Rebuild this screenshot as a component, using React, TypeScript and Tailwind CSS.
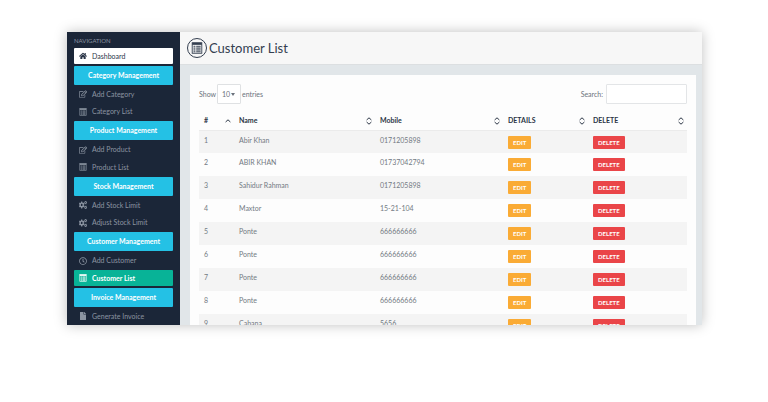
import type { ReactNode } from "react";
import { FaCogs, FaFile, FaHome, FaRegClock, FaRegEdit } from "react-icons/fa";
import clsx from "clsx";

type IconName = "home" | "edit" | "list" | "cogs" | "clock" | "file";

type NavEntry =
  | { kind: "heading"; label: string }
  | { kind: "link"; label: string; icon: IconName; state?: "current" | "home" };

interface Customer {
  id: number;
  name: string;
  mobile: string;
}

const navigation: NavEntry[] = [
  { kind: "link", label: "Dashboard", icon: "home", state: "home" },
  { kind: "heading", label: "Category Management" },
  { kind: "link", label: "Add Category", icon: "edit" },
  { kind: "link", label: "Category List", icon: "list" },
  { kind: "heading", label: "Product Management" },
  { kind: "link", label: "Add Product", icon: "edit" },
  { kind: "link", label: "Product List", icon: "list" },
  { kind: "heading", label: "Stock Management" },
  { kind: "link", label: "Add Stock Limit", icon: "cogs" },
  { kind: "link", label: "Adjust Stock Limit", icon: "cogs" },
  { kind: "heading", label: "Customer Management" },
  { kind: "link", label: "Add Customer", icon: "clock" },
  { kind: "link", label: "Customer List", icon: "list", state: "current" },
  { kind: "heading", label: "Invoice Management" },
  { kind: "link", label: "Generate Invoice", icon: "file" },
];

const customers: Customer[] = [
  { id: 1, name: "Abir Khan", mobile: "0171205898" },
  { id: 2, name: "ABIR KHAN", mobile: "01737042794" },
  { id: 3, name: "Sahidur Rahman", mobile: "0171205898" },
  { id: 4, name: "Maxtor", mobile: "15-21-104" },
  { id: 5, name: "Ponte", mobile: "666666666" },
  { id: 6, name: "Ponte", mobile: "666666666" },
  { id: 7, name: "Ponte", mobile: "666666666" },
  { id: 8, name: "Ponte", mobile: "666666666" },
  { id: 9, name: "Cabana", mobile: "5656" },
];

function ListIcon({ className }: { className?: string }) {
  return (
    <svg viewBox="0 0 16 16" className={className} fill="none" stroke="currentColor" aria-hidden="true">
      <rect x="1.6" y="1" width="12.8" height="14" strokeWidth="1.2" />
      <path d="M1.6 2.4h12.8" strokeWidth="2.8" />
      <path d="M3.4 5h2.4v8.6H3.4zM7 5h5.8v8.6H7z" fill="currentColor" fillOpacity="0.3" stroke="none" />
      <path
        d="M3.4 5.8h2.4M3.4 8.2h2.4M3.4 10.6h2.4M3.4 13h2.4M7 5.8h5.8M7 8.2h5.8M7 10.6h5.8M7 13h5.8"
        strokeWidth="1"
      />
    </svg>
  );
}

function SortIcon({ ascending }: { ascending?: boolean }) {
  return (
    <svg
      viewBox="0 0 6 8"
      className="h-2 w-1.5 shrink-0"
      fill="none"
      stroke="currentColor"
      strokeWidth="1"
      aria-hidden="true"
    >
      {ascending ? <path d="M.6 5 3 2.8 5.4 5" /> : <path d="M.6 3 3 .8 5.4 3M.6 5 3 7.2 5.4 5" />}
    </svg>
  );
}

const icons: Record<IconName, ReactNode> = {
  home: <FaHome className="size-2" />,
  edit: <FaRegEdit className="size-2" />,
  list: <ListIcon className="size-2" />,
  cogs: <FaCogs className="size-2" preserveAspectRatio="none" />,
  clock: <FaRegClock className="size-2" />,
  file: <FaFile className="size-2" />,
};

function Sidebar() {
  return (
    <aside className="flex w-[113px] shrink-0 flex-col bg-[#1b2638] px-[7px] pb-px">
      <p className="pt-1 pb-[2px] text-[6px] leading-[10px] text-[#8d95a1]">NAVIGATION</p>
      <nav className="flex flex-1 flex-col justify-between">
        {navigation.map((entry) =>
          entry.kind === "heading" ? (
            <h2
              key={entry.label}
              className="h-[19px] rounded-[1px] bg-[#24c1e5] text-center text-[7px] leading-[19px] font-bold text-white"
            >
              {entry.label}
            </h2>
          ) : (
            <a
              key={entry.label}
              href="#"
              className={clsx(
                "flex h-4 items-center gap-[5px] rounded-[1px] px-[5px] text-[7px]",
                !entry.state && "text-[#8b94a1]",
                entry.state === "home" && "bg-white text-[#2b3648]",
                entry.state === "current" && "bg-[#08b397] font-bold text-white"
              )}
            >
              {icons[entry.icon]}
              {entry.label}
            </a>
          )
        )}
      </nav>
    </aside>
  );
}

function HeaderCell({ label, ascending }: { label: string; ascending?: boolean }) {
  return (
    <th scope="col" className="h-[18px] p-0 pr-[3px] pl-[5px] text-left font-bold">
      <span className="flex items-center justify-between">
        {label}
        <SortIcon ascending={ascending} />
      </span>
    </th>
  );
}

function CustomerTable() {
  return (
    <table className="mt-2 w-full table-fixed border-collapse text-[7px] leading-[9px]">
      <colgroup>
        <col className="w-[35px]" />
        <col className="w-[141px]" />
        <col className="w-[128px]" />
        <col className="w-[85px]" />
        <col className="w-[99px]" />
      </colgroup>
      <thead className="border-b border-[#ebebeb] text-[#2b3545]">
        <tr>
          <HeaderCell label="#" ascending />
          <HeaderCell label="Name" />
          <HeaderCell label="Mobile" />
          <HeaderCell label="DETAILS" />
          <HeaderCell label="DELETE" />
        </tr>
      </thead>
      <tbody className="text-[#737a83]">
        {customers.map((customer) => (
          <tr key={customer.id} className="h-[23px] align-top odd:bg-[#f4f4f4]">
            <td className="pt-[5px] pl-[5px]">{customer.id}</td>
            <td className="pt-[5px] pl-[5px]">{customer.name}</td>
            <td className="pt-[5px] pl-[5px]">{customer.mobile}</td>
            <td className="pt-[5px] pl-[5px]">
              <button className="block h-[13px] rounded-[1px] bg-[#faab35] px-[5px] text-[6px] font-bold text-white">
                EDIT
              </button>
            </td>
            <td className="pt-[5px] pl-[5px]">
              <button className="block h-[13px] rounded-[1px] bg-[#ea4548] px-[5px] text-[6px] font-bold text-white">
                DELETE
              </button>
            </td>
          </tr>
        ))}
      </tbody>
    </table>
  );
}

export default function App() {
  return (
    <div className="flex h-screen bg-white pt-8 pr-[66px] pb-[77px] pl-[67px] font-['Lato',sans-serif]">
      <div className="flex min-w-0 flex-1 overflow-hidden shadow-[0_0_12px_rgba(0,0,0,0.25)]">
        <Sidebar />
        <main className="flex min-w-0 flex-1 flex-col bg-[#e1e6e9]">
          <header className="flex h-[33px] shrink-0 items-center gap-0.5 border-b border-[#dcdfe1] bg-[#f7f7f7] px-[7px] text-[#333e4f]">
            <span className="flex size-5 items-center justify-center rounded-full border border-current">
              <ListIcon className="size-3" />
            </span>
            <h1 className="text-[13px] leading-5">Customer List</h1>
          </header>
          <section className="mt-[10px] mr-[6px] ml-[10px] flex-1 bg-[#fdfdfd] px-[9px] pt-[9px]">
            <div className="flex items-center justify-between text-[7px] text-[#6b727c]">
              <div className="flex items-center gap-px">
                <label htmlFor="page-size">Show</label>
                <span className="relative flex items-center">
                  <select
                    id="page-size"
                    defaultValue="10"
                    className="h-5 w-6 appearance-none rounded-[1px] border border-[#dfe1e3] bg-white pl-1"
                  >
                    <option>10</option>
                    <option>25</option>
                    <option>50</option>
                    <option>100</option>
                  </select>
                  <svg viewBox="0 0 4 3" className="pointer-events-none absolute right-1.5 h-[3px] w-1" aria-hidden="true">
                    <path d="M0 0h4L2 3z" fill="currentColor" />
                  </svg>
                </span>
                <span>entries</span>
              </div>
              <div className="flex items-center gap-[3px]">
                <label htmlFor="search">Search:</label>
                <input
                  id="search"
                  type="search"
                  className="h-5 w-[81px] rounded-[1px] border border-[#e3e5e7] bg-white px-1"
                />
              </div>
            </div>
            <CustomerTable />
          </section>
        </main>
      </div>
    </div>
  );
}
